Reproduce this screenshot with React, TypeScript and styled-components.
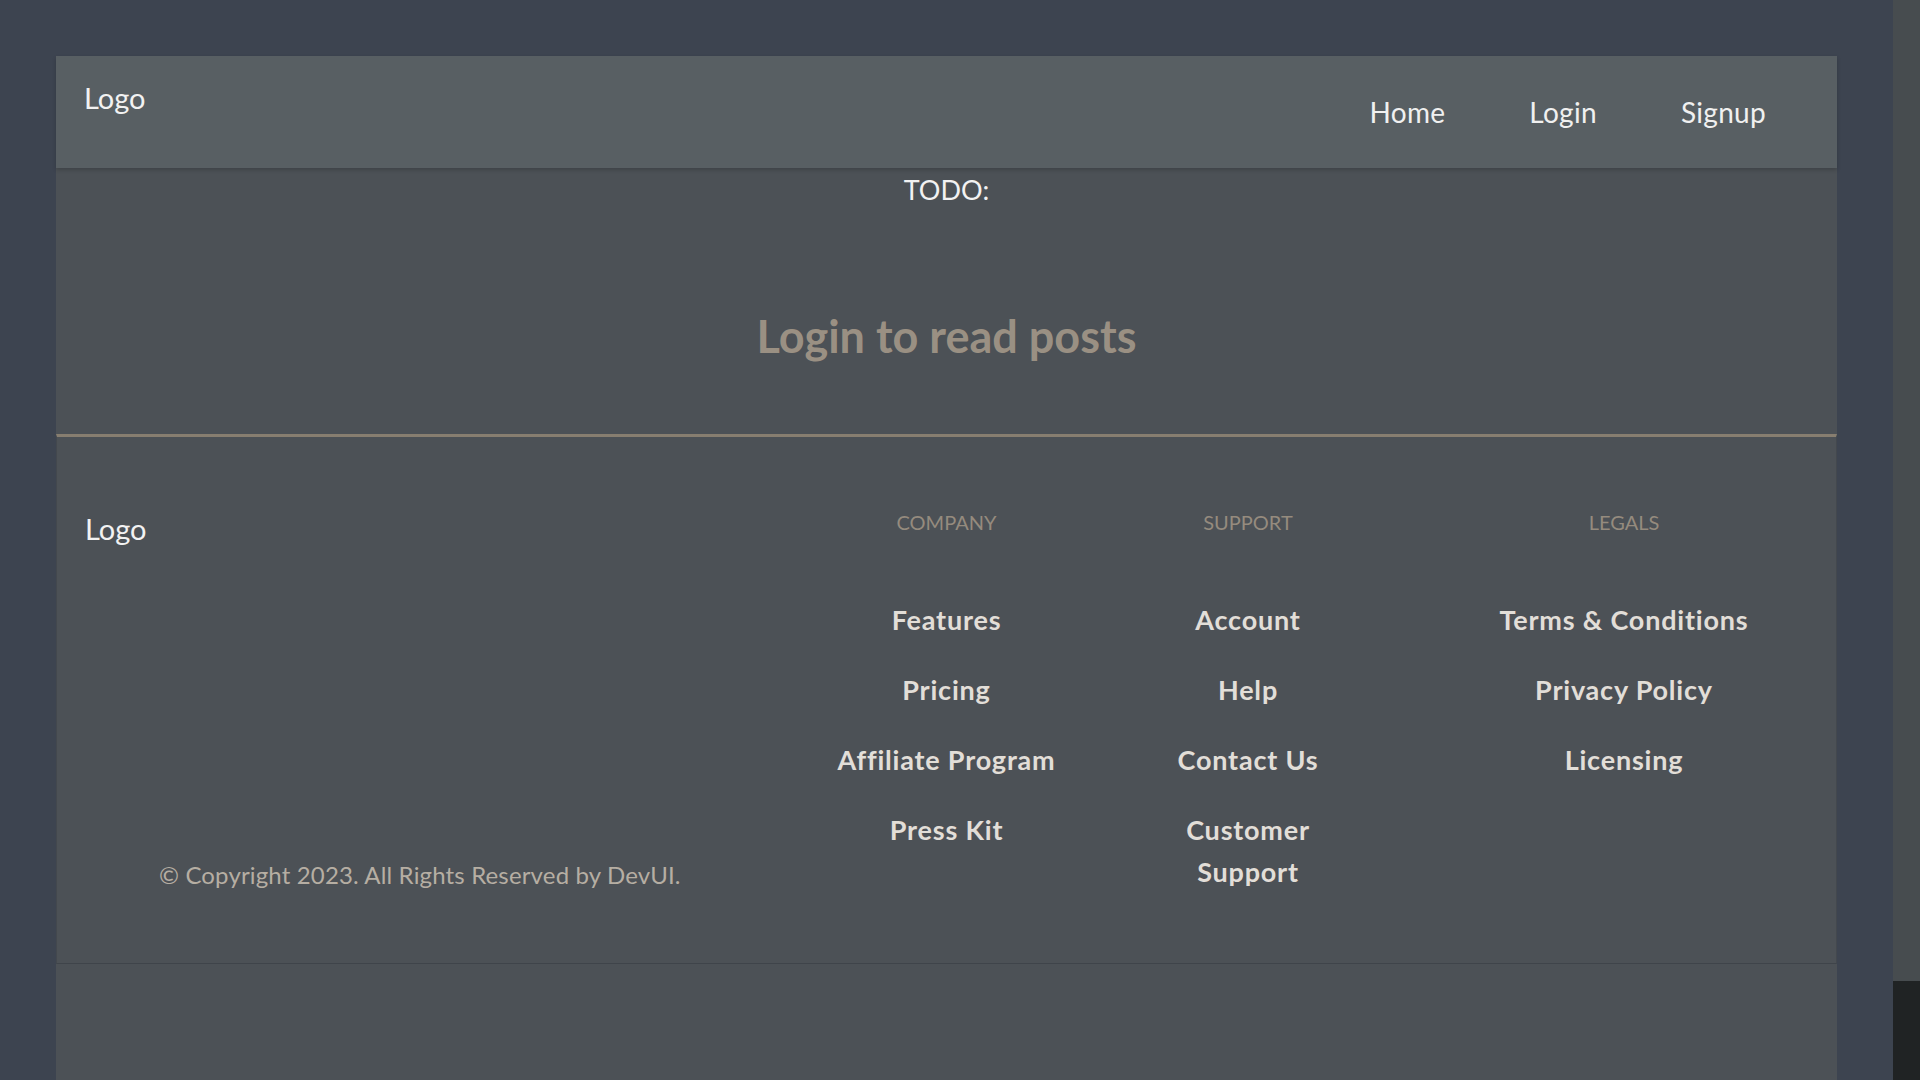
import React from "react";
import styled, { createGlobalStyle } from "styled-components";

const GlobalStyle = createGlobalStyle`
  html, body {
    margin: 0;
    padding: 0;
    background: #3d4450;
    font-family: Lato, "Open Sans", "Noto Sans", sans-serif;
  }
  * { box-sizing: border-box; }
`;

const Screen = styled.div`
  display: flex;
  height: 100vh;
  overflow: hidden;
`;

const Viewport = styled.div`
  flex: 1;
  display: flex;
  flex-direction: column;
  padding: 56px 56px 0;
  min-width: 0;
`;

const Card = styled.div`
  flex: 1;
  display: flex;
  flex-direction: column;
  background: #4c5156;
`;

const Header = styled.header`
  position: relative;
  z-index: 1;
  height: 112px;
  display: flex;
  justify-content: space-between;
  align-items: flex-start;
  background: #585f63;
  box-shadow: 0 2px 4px rgba(0, 0, 0, 0.18);
  padding: 0 71px 0 28px;
`;

const Brand = styled.div<{ $top?: number }>`
  margin-top: ${(p) => p.$top ?? 0}px;
  font-size: 29px;
  line-height: 1.5;
  color: #f2f2f2;
`;

const Nav = styled.nav`
  align-self: center;
  display: flex;
  gap: 84px;
  margin-top: 2px;
`;

const NavLink = styled.a`
  font-size: 28px;
  line-height: 1.2;
  letter-spacing: 0.3px;
  color: #f0f0f0;
  text-decoration: none;
  cursor: pointer;
`;

const Main = styled.main`
  height: 266px;
  display: flex;
  flex-direction: column;
  align-items: center;
`;

const Todo = styled.p`
  margin: 1px 0 0;
  font-size: 27px;
  line-height: 42px;
  color: #f2f2f2;
`;

const Prompt = styled.h2`
  margin: 98px 0 0;
  font-size: 45px;
  line-height: 1.2;
  font-weight: 700;
  color: #9a9083;
`;

const Footer = styled.footer`
  display: grid;
  grid-template-columns: 764.5px 250px 353px 399px;
  padding: 70px 12.5px 70px 0;
  border-top: 3px solid #877e70;
  border-left: 1px solid #43484e;
  border-right: 1px solid #43484e;
  border-bottom: 1px solid #3f444a;
`;

const FooterBrand = styled.div`
  display: flex;
  flex-direction: column;
  justify-content: space-between;
  padding-left: 28px;
`;

const Copyright = styled.p`
  margin: 0 0 0 74px;
  font-size: 24px;
  line-height: 1.5;
  letter-spacing: 0.15px;
  color: #b6aea3;
`;

const Column = styled.div`
  display: flex;
  flex-direction: column;
  align-items: center;
  text-align: center;
`;

const ColumnTitle = styled.h4`
  margin: 0;
  font-size: 20px;
  line-height: 1.5;
  font-weight: 400;
  color: #958b7e;
  text-transform: uppercase;
`;

const LinkList = styled.ul<{ $max?: number }>`
  list-style: none;
  margin: 62px 0 0;
  padding: 0;
  display: flex;
  flex-direction: column;
  gap: 28px;
  max-width: ${(p) => (p.$max ? `${p.$max}px` : "none")};
`;

const FooterLink = styled.li`
  font-size: 27px;
  line-height: 42px;
  letter-spacing: 0.8px;
  font-weight: 700;
  color: #e2ded8;
  cursor: pointer;
`;

const ScrollRail = styled.div`
  width: 27px;
  display: flex;
  flex-direction: column;
  justify-content: flex-end;
  background: #474c4f;
`;

const ScrollThumb = styled.div`
  height: 99px;
  background: #202324;
`;

const columns: { title: string; links: string[]; max?: number }[] = [
  { title: "Company", links: ["Features", "Pricing", "Affiliate Program", "Press Kit"] },
  { title: "Support", links: ["Account", "Help", "Contact Us", "Customer Support"], max: 190 },
  { title: "Legals", links: ["Terms & Conditions", "Privacy Policy", "Licensing"] },
];

export default function App() {
  return (
    <>
      <GlobalStyle />
      <Screen>
        <Viewport>
          <Card>
            <Header>
              <Brand $top={20}>Logo</Brand>
              <Nav>
                <NavLink>Home</NavLink>
                <NavLink>Login</NavLink>
                <NavLink>Signup</NavLink>
              </Nav>
            </Header>
            <Main>
              <Todo>TODO:</Todo>
              <Prompt>Login to read posts</Prompt>
            </Main>
            <Footer>
              <FooterBrand>
                <Brand>Logo</Brand>
                <Copyright>© Copyright 2023. All Rights Reserved by DevUI.</Copyright>
              </FooterBrand>
              {columns.map((col) => (
                <Column key={col.title}>
                  <ColumnTitle>{col.title}</ColumnTitle>
                  <LinkList $max={col.max}>
                    {col.links.map((l) => (
                      <FooterLink key={l}>{l}</FooterLink>
                    ))}
                  </LinkList>
                </Column>
              ))}
            </Footer>
          </Card>
        </Viewport>
        <ScrollRail>
          <ScrollThumb />
        </ScrollRail>
      </Screen>
    </>
  );
}
